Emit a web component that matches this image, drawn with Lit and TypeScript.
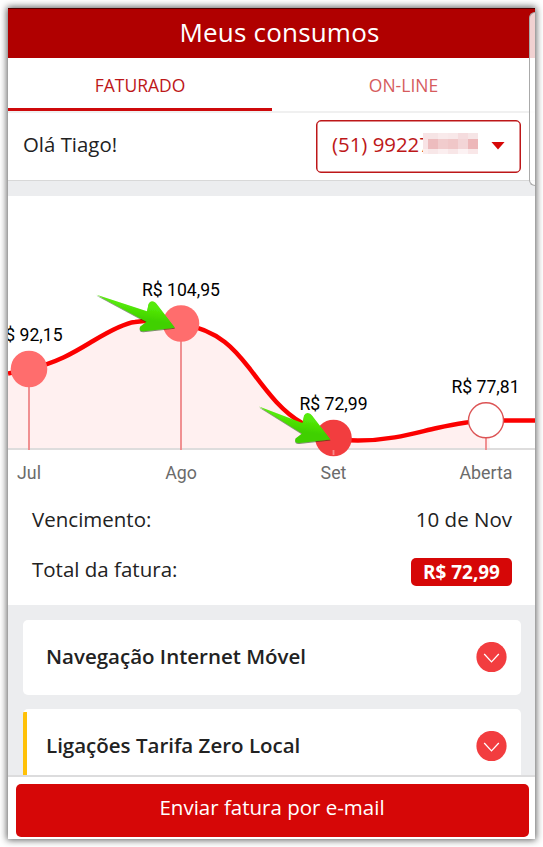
import { LitElement, html, css, svg } from "lit";
import { customElement, property } from "lit/decorators.js";

interface Point { x: number; y: number; r: number; value: string; month: string; labelX: number; labelY: number; fill: string; stroke: string }

const POINTS: Point[] = [
  { x: 21, y: 173, r: 18.3, value: "R$ 92,15", month: "Jul", labelX: 20.5, labelY: 145, fill: "#ff6d6d", stroke: "none" },
  { x: 173, y: 127.5, r: 18.3, value: "R$ 104,95", month: "Ago", labelX: 173, labelY: 99.5, fill: "#ff6d6d", stroke: "none" },
  { x: 325.5, y: 242, r: 18.3, value: "R$ 72,99", month: "Set", labelX: 325.5, labelY: 213.5, fill: "#f23d3f", stroke: "none" },
  { x: 478, y: 224.3, r: 17.5, value: "R$ 77,81", month: "Aberta", labelX: 477.5, labelY: 196.5, fill: "#fff", stroke: "#dc5455" },
];

const CURVE = "M0 177.5L21 173C50 167 70 154 85 145C105 133 118 127 127 126C140 124 160 124 173 127.5C213 135 228 155 242 173C262 200 275 216 294 227C312 239 325 244.5 350 244.5C385 244.5 410 236 429 232C445 228.5 465 225 478 224.5L527 224.5";

const BLUR = [
  ["#f8e3e5", "#f6e4e5", "#f9eaeb", "#f8e8e9", "#f5dcde", "#f6e5e6"],
  ["#f8e3e5", "#edbcbe", "#f1cccd", "#f0c7c8", "#f3d5d7", "#edb7b9"],
  ["#fbeeee", "#f8e7e8", "#fbeeef", "#f8e6e7", "#fcf2f3", "#f9e7e8"],
];

@customElement("consumption-chart")
export class ConsumptionChart extends LitElement {
  static styles = css`
    :host { display: block; height: 294px; background: #fff; }
    svg { display: block; }
    text { font-family: Roboto, sans-serif; text-anchor: middle; }
    .value { font-size: 17.6px; fill: #000; }
    .month { font-size: 17.8px; fill: #6b6b6b; }
  `;

  private arrow(x: number, y: number, tail: number) {
    return svg`<g transform="translate(${x} ${y})" filter="url(#shade)">
      <path d="M${tail} -.5L50.5 16L52 8.6Q54 4.4 58.5 7L60 8.5L78.5 32.4L47 36Q42 36 43.5 31.5L50 26.5Z" fill="url(#green)"/>
    </g>`;
  }

  render() {
    return html`<svg width="527" height="294" viewBox="0 0 527 294">
      <defs>
        <linearGradient id="green" x1="0.45" y1="0.75" x2="0.58" y2="0.3">
          <stop offset="0.2" stop-color="#3fd002"/><stop offset="1" stop-color="#55ea08"/>
        </linearGradient>
        <filter id="shade" x="-10%" y="-20%" width="120%" height="150%">
          <feDropShadow dx="0" dy="0.9" stdDeviation="0.5" flood-color="#123400" flood-opacity="0.6"/>
        </filter>
      </defs>
      <path d="${CURVE}V253H0Z" fill="#fff0f0"/>
      <path d="M478 200H527V252H482Z" fill="#fff"/>
      <path d="M0 253H527" stroke="#dedddd" stroke-width="1.8"/>
      <path d="${CURVE}" fill="none" stroke="#fb0000" stroke-width="4.5"/>
      ${POINTS.map(p => svg`
        <path d="M${p.x} ${p.y}V254" stroke="#ef8587" stroke-width="1.8"/>
        <circle cx=${p.x} cy=${p.y} r=${p.r} fill=${p.fill} stroke=${p.stroke} stroke-width="1.4"/>
        <text class="value" x=${p.labelX} y=${p.labelY}>${p.value}</text>
        <text class="month" x=${p.x} y="283">${p.month}</text>`)}
      <path d="M325.5 254V259" stroke="#f98b8b" stroke-width="1.8"/>
      ${this.arrow(88.5, 99.3, 0)}
      ${this.arrow(244, 211, 7)}
    </svg>`;
  }
}

@customElement("service-card")
export class ServiceCard extends LitElement {
  @property() label = "";
  @property({ type: Boolean, reflect: true }) marked = false;
  static styles = css`
    :host { display: flex; align-items: center; justify-content: space-between; box-sizing: border-box; height: 75px; flex: none;
      padding: 0 14px 0 23px; background: #fff; border-radius: 5px; overflow: hidden; position: relative; }
    :host([marked])::before { content: ""; position: absolute; left: 0; top: 3px; bottom: 0; width: 4px; background: #ffc107; }
    .label { font-weight: 600; font-size: 20.5px; color: #222; line-height: 28px; padding-bottom: 4px; }
    svg { display: block; }
  `;
  render() {
    return html`<span class="label">${this.label}</span>
      <svg width="31" height="31" viewBox="0 0 31 31"><circle cx="15.5" cy="15" r="15.1" fill="#f23d3f"/>
      <path d="M8.2 12L15.5 19.9L22.8 12" fill="none" stroke="#fff" stroke-width="1.3"/></svg>`;
  }
}

@customElement("app-root")
export class AppRoot extends LitElement {
  static styles = css`
    :host { display: block; box-sizing: border-box; width: 543px; height: 847px; padding: 8px; background: #fff; overflow: hidden;
      font-family: "Open Sans", "Noto Sans", sans-serif; color: #222; }
    .screen { position: relative; display: flex; flex-direction: column; width: 527px; height: 831px; background: #fff;
      box-shadow: 0 0 7px 1px rgba(0,0,0,.65); }
    .title { height: 50px; box-sizing: border-box; flex: none; border-top: 1px solid #510000; background: #b00000; color: #fff;
      text-align: center; font-size: 26px; letter-spacing: .2px; line-height: 46px; padding-left: 16px; }
    .tabs { display: grid; grid-template-columns: 264px 263px; height: 55px; flex: none; box-sizing: border-box; border-bottom: 2px solid #f0f0f0; }
    .tab { text-align: center; font-size: 17.5px; line-height: 55px; color: #d65b5d; box-sizing: border-box; height: 53px; }
    .tab.on { color: #bd1719; border-bottom: 3px solid #ce090b; }
    .user { display: flex; align-items: center; justify-content: space-between; height: 68px; box-sizing: border-box; flex: none;
      padding: 0 14px 0 15px; border-bottom: 1px solid #d8d8d8; font-size: 20.4px; }
    .hello { padding-bottom: 6px; }
    .phone { display: flex; align-items: center; box-sizing: border-box; width: 205px; height: 53px; margin-bottom: 1px; padding: 0 15px 5px;
      border: 1px solid #bd1719; box-shadow: inset 0 0 0 .5px #bd1719; border-radius: 5px; color: #bd1719; position: relative; }
    .mask { position: absolute; left: 106px; top: 12px; }
    .caret { position: absolute; right: 15px; top: 21px; width: 14px; height: 8px; background: #d60707; clip-path: polygon(0 0, 100% 0, 50% 100%); }
    .gap { height: 15px; flex: none; background: #ecedef; }
    .facts { height: 115px; flex: none; box-sizing: border-box; padding: 5px 23px 0 24px; font-size: 20.5px; }
    .fact { display: flex; justify-content: space-between; align-items: center; height: 50px; }
    .fact span { padding-bottom: 2px; }
    .fact .total { display: block; box-sizing: border-box; width: 101px; height: 28px; margin-top: 4px; border-radius: 5px; background: #d60707; color: #fff;
      text-align: center; font-weight: 700; font-size: 18.9px; line-height: 28px; padding: 0; }
    .cards { flex: 1; min-height: 0; overflow: hidden; display: flex; flex-direction: column; gap: 14px; padding: 15px 14px 0 15px; background: #ecedef; }
    .footer { height: 64px; flex: none; box-sizing: border-box; border-top: 2px solid #dcdcdd; padding: 7px 6.5px 0 7.5px; background: #fff; }
    .send { display: block; width: 100%; height: 52.5px; border: 0; border-radius: 5px; background: #d60707; color: #fff; font: 20.5px/47px "Open Sans", sans-serif; padding: 0 0 5px; }
    .edge { position: absolute; right: 0; top: 4px; width: 6px; height: 174px; box-sizing: border-box; border: 1px solid #aaa; border-right: 0;
      border-radius: 7px 0 0 7px; background: rgba(255,255,255,.82); }
  `;

  render() {
    return html`<div class="screen">
      <header class="title">Meus consumos</header>
      <nav class="tabs"><div class="tab on">FATURADO</div><div class="tab">ON-LINE</div></nav>
      <div class="user"><span class="hello">Olá Tiago!</span>
        <div class="phone"><span>(51) 99227</span>
          <svg class="mask" width="55" height="21" shape-rendering="crispEdges">
            ${BLUR.map((row, r) => row.map((c, i) => svg`<rect x=${i ? i * 10 - 5 : 0} y=${[0, 6, 16][r]} width=${i ? 10 : 5} height=${[6, 10, 5][r]} fill=${c}/>`))}
          </svg>
          <i class="caret"></i></div>
      </div>
      <div class="gap"></div>
      <consumption-chart></consumption-chart>
      <section class="facts">
        <div class="fact"><span>Vencimento:</span><span>10 de Nov</span></div>
        <div class="fact"><span>Total da fatura:</span><span class="total">R$ 72,99</span></div>
      </section>
      <section class="cards">
        <service-card label="Navegação Internet Móvel"></service-card>
        <service-card label="Ligações Tarifa Zero Local" marked></service-card>
      </section>
      <footer class="footer"><button class="send">Enviar fatura por e-mail</button></footer>
      <div class="edge"></div>
    </div>`;
  }
}
